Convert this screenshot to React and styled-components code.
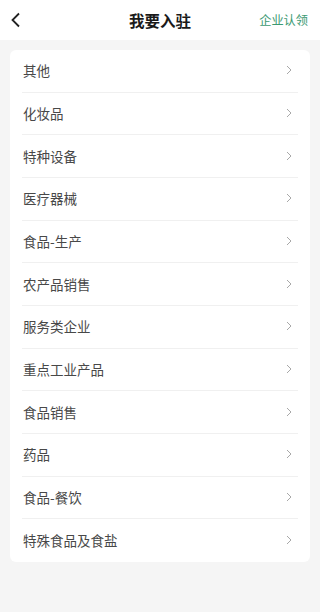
import styled, { createGlobalStyle } from "styled-components";

const GlobalStyle = createGlobalStyle`
  html, body {
    margin: 0;
    padding: 0;
    background: #f5f5f5;
    font-family: "Noto Sans CJK SC", "Noto Sans", sans-serif;
  }
`;

const Page = styled.div`
  width: 320px;
  min-height: 612px;
  background: #f5f5f5;
`;

const Header = styled.header`
  height: 40px;
  background: #ffffff;
  display: grid;
  grid-template-columns: 60px 1fr 60px;
  align-items: center;
`;

const Back = styled.button`
  all: unset;
  padding-left: 10px;
  display: flex;
  align-items: center;
  svg {
    width: 12px;
    height: 16px;
  }
`;

const Title = styled.h1`
  margin: 0;
  text-align: center;
  font-size: 15.5px;
  font-weight: 700;
  color: #1a1a1a;
`;

const Action = styled.span`
  justify-self: end;
  padding-right: 12px;
  font-size: 12.2px;
  color: #3c9a72;
  white-space: nowrap;
`;

const Card = styled.ul`
  list-style: none;
  margin: 10px 10px 0;
  padding: 0 12px;
  background: #ffffff;
  border-radius: 6px;
`;

const Row = styled.li`
  height: 42.67px;
  display: flex;
  align-items: center;
  justify-content: space-between;
  box-sizing: border-box;
  border-bottom: ${(p) => (p.$last ? "none" : "1px solid #f0f0f0")};
  padding: 0 6px 1px 1px;
`;

const Label = styled.span`
  font-size: 13.5px;
  color: #484848;
`;

const Chevron = () => (
  <svg width="6" height="10" viewBox="0 0 6 10" fill="none">
    <path d="M1 1l4 4-4 4" stroke="#a8a8a8" strokeWidth="1" />
  </svg>
);

const items = [
  "其他",
  "化妆品",
  "特种设备",
  "医疗器械",
  "食品-生产",
  "农产品销售",
  "服务类企业",
  "重点工业产品",
  "食品销售",
  "药品",
  "食品-餐饮",
  "特殊食品及食盐",
];

export default function App() {
  return (
    <Page>
      <GlobalStyle />
      <Header>
        <Back aria-label="返回">
          <svg viewBox="0 0 12 16" fill="none">
            <path d="M9 1.5L2.5 8 9 14.5" stroke="#222" strokeWidth="1.8" />
          </svg>
        </Back>
        <Title>我要入驻</Title>
        <Action>企业认领</Action>
      </Header>
      <Card>
        {items.map((t, i) => (
          <Row key={t} $last={i === items.length - 1}>
            <Label>{t}</Label>
            <Chevron />
          </Row>
        ))}
      </Card>
    </Page>
  );
}
